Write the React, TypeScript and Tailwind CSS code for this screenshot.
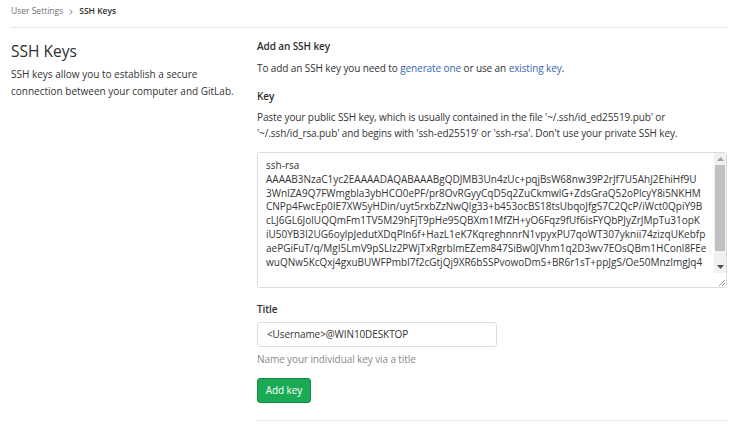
import React from 'react';

const KEY_LINES = [
  'ssh-rsa',
  'AAAAB3NzaC1yc2EAAAADAQABAAABgQDJMB3Un4zUc+pqjBsW68nw39P2rJf7U5AhJ2EhiHf9U',
  '3WnIZA9Q7FWmgbla3ybHCO0ePF/pr8OvRGyyCqD5q2ZuCkmwlG+ZdsGraQ52oPlcyY8i5NKHM',
  'CNPp4FwcEp0IE7XW5yHDin/uyt5rxbZzNwQlg33+b453ocBS18tsUbqoJfgS7C2QcP/iWct0QpiY9B',
  'cLJ6GL6JolUQQmFm1TV5M29hFjT9pHe95QBXm1MfZH+yO6Fqz9fUf6isFYQbPJyZrJMpTu31opK',
  'iU50YB3I2UG6oylpJedutXDqPln6f+HazL1eK7KqreghnnrN1vpyxPU7qoWT307yknii74zizqUKebfp',
  'aePGiFuT/q/MgI5LmV9pSLIz2PWjTxRgrblmEZem847SiBw0JVhm1q2D3wv7EOsQBm1HConl8FEe',
  'wuQNw5KcQxj4gxuBUWFPmbl7f2cGtjQj9XR6bSSPvowoDmS+BR6r1sT+ppJgS/Oe50MnzImgJq4',
];

// fake textarea scrollbar + resize grip
function Scrollbar() {
  return (
    <div className="flex w-[12px] shrink-0 flex-col items-center bg-[#f1f1f1]">
      <div className="flex h-[12px] w-full items-center justify-center">
        <svg width="7" height="4" viewBox="0 0 7 4">
          <path d="M0 4 L3.5 0 L7 4 Z" fill="#a3a3a3" />
        </svg>
      </div>
      <div className="h-[86px] w-[10px] bg-[#c1c1c1]" />
      <div className="flex-1" />
      <div className="flex h-[12px] w-full items-center justify-center">
        <svg width="7" height="4" viewBox="0 0 7 4">
          <path d="M0 0 L7 0 L3.5 4 Z" fill="#505050" />
        </svg>
      </div>
      <div className="flex h-[14px] w-full items-end justify-end bg-white">
        <svg width="8" height="8" viewBox="0 0 8 8">
          <path d="M7 1 L1 7 M7 4 L4 7" stroke="#9a9a9a" strokeWidth="1" />
        </svg>
      </div>
    </div>
  );
}

export default function App() {
  return (
    <div
      className="h-[424px] w-[750px] overflow-hidden bg-white pl-[11px] pr-[23px] text-[#2e2e2e]"
      style={{ fontFamily: '"Open Sans", "Noto Sans", Arial, sans-serif' }}
    >
      <div className="flex h-[28px] items-center gap-[5px] border-b border-[#e5e5e5] pb-[4px] text-[8.5px]">
        <span className="text-[#707070]">User Settings</span>
        <svg width="4" height="6" viewBox="0 0 4 6" className="mx-[1px]">
          <path d="M0.8 0.5 L3.2 3 L0.8 5.5" stroke="#707070" strokeWidth="0.9" fill="none" />
        </svg>
        <span className="font-semibold text-[#2e2e2e]">SSH Keys</span>
      </div>

      <div className="flex">
        <div className="w-[246px] shrink-0 pr-[12px] pt-[12px]">
          <h1 className="text-[15.5px] leading-[22px] text-[#2e2e2e]">SSH Keys</h1>
          <p className="mt-[4px] text-[10px] leading-[17px] text-[#333]">
            SSH keys allow you to establish a secure connection between your computer and GitLab.
          </p>
        </div>

        <div className="min-w-0 flex-1 pt-[10px] text-[10px] tracking-[-0.1px]">
          <h4 className="font-semibold leading-[16px]">Add an SSH key</h4>
          <p className="mt-[6px] leading-[16px] text-[#333]">
            To add an SSH key you need to <span className="text-[#3867b0]">generate one</span> or use an{' '}
            <span className="text-[#3867b0]">existing key</span>.
          </p>

          <div className="mt-[12px] font-semibold leading-[16px]">Key</div>
          <p className="mt-[5px] leading-[16px] text-[#333]">
            Paste your public SSH key, which is usually contained in the file '~/.ssh/id_ed25519.pub' or
            '~/.ssh/id_rsa.pub' and begins with 'ssh-ed25519' or 'ssh-rsa'. Don't use your private SSH key.
          </p>

          <div className="mt-[11px] flex h-[136px] rounded-[3px] border border-[#dcdcdc] bg-white">
            <div className="min-w-0 flex-1 overflow-hidden pl-[8px] pt-[6px] text-[10px] leading-[13.8px] tracking-normal text-[#333]">
              {KEY_LINES.map((line) => (
                <div key={line} className="whitespace-nowrap">
                  {line}
                </div>
              ))}
            </div>
            <Scrollbar />
          </div>

          <div className="mt-[13px] font-semibold leading-[16px]">Title</div>
          <div className="mt-[5px] flex h-[25px] w-[240px] items-center rounded-[3px] border border-[#dcdcdc] px-[9px] text-[#333]">
            &lt;Username&gt;@WIN10DESKTOP
          </div>
          <p className="mt-[4px] leading-[16px] text-[#8a8a8a]">Name your individual key via a title</p>

          <button className="mt-[11px] flex h-[25px] w-[54px] items-center justify-center rounded-[3px] border border-[#168f48] bg-[#1aaa55] text-white">
            Add key
          </button>

          <div className="mt-[17px] border-b border-[#e5e5e5]" />
        </div>
      </div>
    </div>
  );
}
